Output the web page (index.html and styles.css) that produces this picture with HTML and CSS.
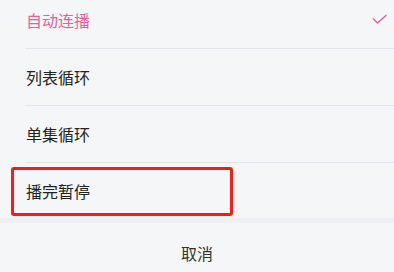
FILE: index.html
```html
<!DOCTYPE html>
<html lang="zh-CN">
<head>
    <meta charset="UTF-8">
    <title>播放模式</title>
    <link rel="stylesheet" href="styles.css">
</head>
<body>
<!--播放模式列表-->
<ul class="mode_list">
    <li class="mode_item active">
        <div class="mode_inner">
            <span>自动连播</span>
            <svg class="check" width="16" height="11" viewBox="0 0 16 11">
                <path d="M1 4.5 L5.5 9 L14.5 1" fill="none" stroke="#e8619a" stroke-width="1.4"/>
            </svg>
        </div>
    </li>
    <li class="mode_item">
        <div class="mode_inner"><span>列表循环</span></div>
    </li>
    <li class="mode_item">
        <div class="mode_inner"><span>单集循环</span></div>
    </li>
    <li class="mode_item last">
        <div class="mode_inner"><span>播完暂停</span></div>
        <div class="mark"></div>
    </li>
</ul>
<!--播放模式列表-->
<div class="cancel">取消</div>
</body>
</html>
```

FILE: styles.css
```css
* {
    padding: 0;
    margin: 0;
}

body {
    background: #f5f6f8;
    font-family: "Noto Sans CJK SC", "Noto Sans", sans-serif;
    font-size: 16px;
    color: #222;
    overflow: hidden;
}

li {
    list-style: none;
}

.mode_list {
    margin-top: -8px;
}

.mode_item {
    position: relative;
    padding-left: 25px;
}

.mode_inner {
    height: 56px;
    display: flex;
    align-items: center;
    justify-content: space-between;
    padding-left: 1px;
    padding-right: 6px;
    border-bottom: 1px solid #e3e4e7;
}

.mode_item.last .mode_inner {
    height: 55px;
    border-bottom: none;
}

.active {
    color: #e8619a;
}

.check {
    margin-top: -1px;
}

.mark {
    position: absolute;
    left: 11px;
    top: 4px;
    width: 216px;
    height: 43px;
    border: 3px solid #ff1a14;
    border-radius: 3px;
}

.cancel {
    border-top: 5px solid #eeeff2;
    height: 60px;
    line-height: 60px;
    text-align: center;
    color: #333;
}
```
